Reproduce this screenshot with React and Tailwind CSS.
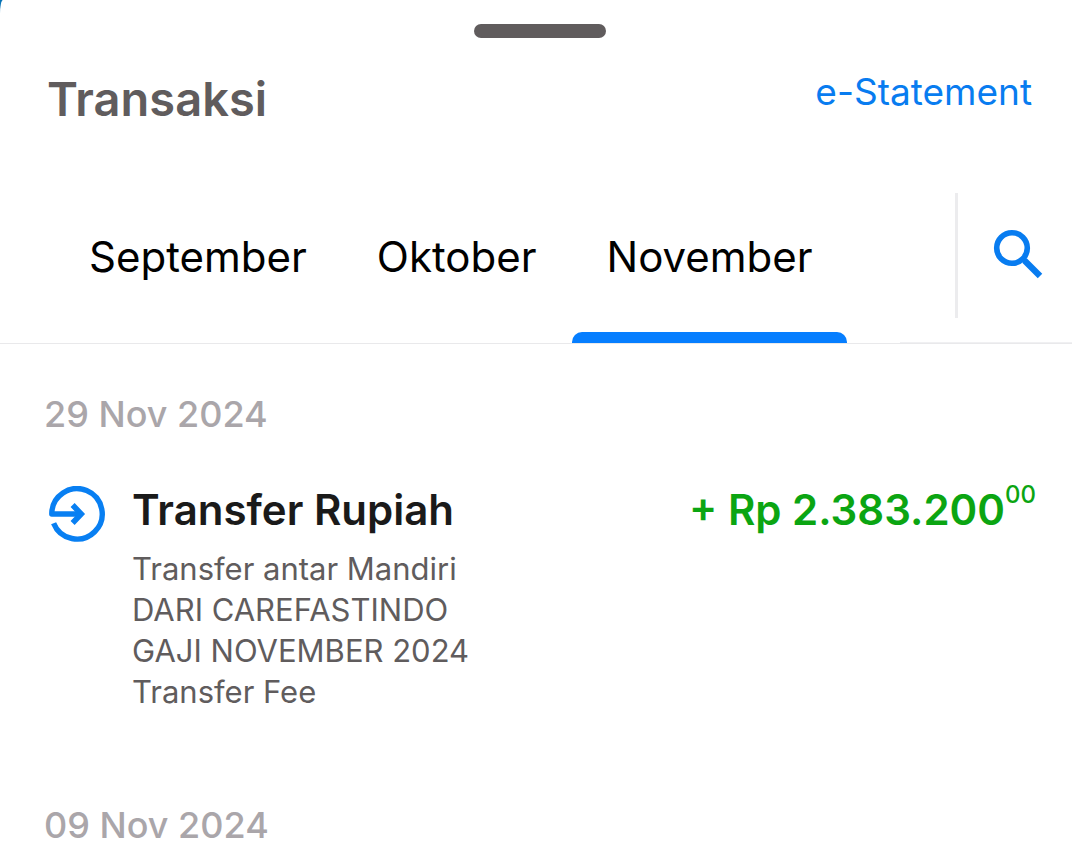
const months = ["September", "Oktober", "November"];

function SearchIcon() {
  return (
    <svg width="50" height="50" viewBox="0 0 50 50" fill="none" stroke="#087cf0" aria-hidden="true">
      <circle cx="19" cy="19" r="15.3" strokeWidth="5.6" />
      <path d="M31.5 31.5 L47 47" strokeWidth="6.4" />
      <path d="M29 29 L33 33" strokeWidth="4" />
    </svg>
  );
}

function IncomingIcon() {
  return (
    <svg
      width="56"
      height="56"
      viewBox="0 0 56 56"
      fill="none"
      stroke="#087ff2"
      strokeWidth="5.4"
      className="shrink-0"
      aria-hidden="true"
    >
      <path d="M32 28 H2.8 A25.2 25.2 0 1 1 4.6 37.2" strokeLinejoin="round" />
      <path d="M23.6 19 L32.2 28 L23.6 37" strokeWidth="5.6" />
    </svg>
  );
}

function DateHeading({ children }) {
  return <h2 className="text-[36px] leading-[44px] font-medium text-[#aaa6aa]">{children}</h2>;
}

export default function App() {
  return (
    <div className="bg-[#0873b5] font-['Inter','Liberation_Sans',sans-serif]">
      <main className="min-h-screen rounded-tl-[3px_14px] bg-white">
        <div className="flex justify-center pt-6 pl-2">
          <div className="h-[14px] w-[132px] rounded-full bg-[#605c5d]" />
        </div>

        <header className="flex items-start justify-between pt-8 pr-10 pl-[47px]">
          <h1 className="text-[47px] leading-[58px] font-semibold text-[#605c5d]">Transaksi</h1>
          <a href="#e-statement" className="text-[37px] leading-[44px] text-[#087cf0]">
            e-Statement
          </a>
        </header>

        <div className="mt-[65px] flex items-stretch justify-between border-b border-[#e9e9eb]">
          <nav className="flex gap-[2px] pl-[55px]" aria-label="Bulan">
            {months.map((month) => (
              <button
                key={month}
                type="button"
                className="flex flex-col justify-between text-[42px] leading-[52px] text-black"
              >
                <span className="px-[34px] pt-[38px]">{month}</span>
                {month === "November" && (
                  <span className="h-[11px] w-full rounded-t-[10px] bg-[#067eff]" />
                )}
              </button>
            ))}
          </nav>
          <div className="flex h-[150px] w-[172px] items-start justify-end border-b border-[#f0f0f2]">
            <div className="flex h-[125px] w-[117px] items-start border-l-[3px] border-[#ececee] pt-9 pl-[35px]">
              <button type="button" aria-label="Cari">
                <SearchIcon />
              </button>
            </div>
          </div>
        </div>

        <div className="pt-12 pr-9 pl-11">
          <section>
            <DateHeading>29 Nov 2024</DateHeading>
            <article className="mt-12 flex items-start pl-[5px]">
              <div className="pt-[2px]">
                <IncomingIcon />
              </div>
              <div className="ml-[27px] grow">
                <div className="flex items-start justify-between text-[42px] leading-[52px] font-semibold">
                  <h3 className="text-[#1a1a1a]">Transfer Rupiah</h3>
                  <p className="flex text-[#0ba512]">
                    + Rp 2.383.200
                    <span className="text-[24px] leading-[22px] font-medium">00</span>
                  </p>
                </div>
                <p className="mt-3 text-[31px] leading-[41px] text-[#605c5d]">
                  Transfer antar Mandiri
                  <br />
                  DARI CAREFASTINDO
                  <br />
                  GAJI NOVEMBER 2024
                  <br />
                  Transfer Fee
                </p>
              </div>
            </article>
          </section>
          <section className="pt-[91px]">
            <DateHeading>09 Nov 2024</DateHeading>
          </section>
        </div>
      </main>
    </div>
  );
}
